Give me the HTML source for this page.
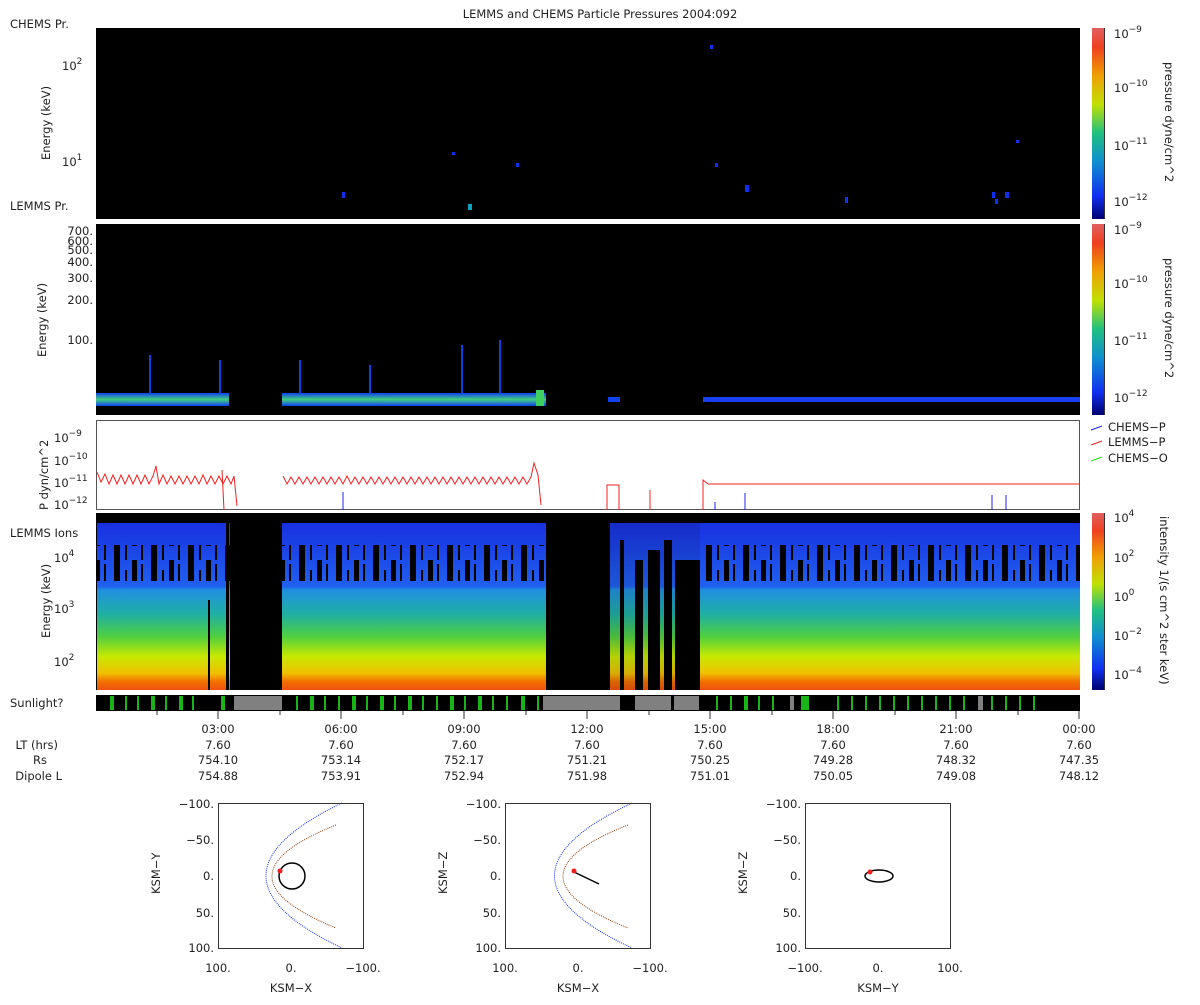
<!DOCTYPE html>
<html><head><meta charset="utf-8"><style>
body{margin:0;background:#fff;width:1200px;height:1000px;overflow:hidden;font-family:"Liberation Sans",sans-serif}
svg text{font-family:"DejaVu Sans","Liberation Sans",sans-serif;font-size:11.5px;fill:#222}
</style></head><body>
<svg width="1200" height="1000" xmlns="http://www.w3.org/2000/svg">
<defs>
<linearGradient id="cb" x1="0" y1="1" x2="0" y2="0">
<stop offset="0" stop-color="#000070"/><stop offset="0.12" stop-color="#1030f0"/><stop offset="0.3" stop-color="#1090d0"/><stop offset="0.45" stop-color="#20c080"/><stop offset="0.6" stop-color="#c0e000"/><stop offset="0.75" stop-color="#f0a000"/><stop offset="0.9" stop-color="#f04020"/><stop offset="1" stop-color="#e06060"/></linearGradient>
<linearGradient id="ion" x1="0" y1="0" x2="0" y2="1">
<stop offset="0" stop-color="#1830e0"/><stop offset="0.38" stop-color="#2060f0"/><stop offset="0.4" stop-color="#2090e0"/><stop offset="0.55" stop-color="#20b0a0"/><stop offset="0.68" stop-color="#50d040"/><stop offset="0.8" stop-color="#c8e800"/><stop offset="0.9" stop-color="#f0c000"/><stop offset="0.95" stop-color="#f07000"/><stop offset="1" stop-color="#f05010"/></linearGradient>
<linearGradient id="band" x1="0" y1="0" x2="0" y2="1">
<stop offset="0" stop-color="#1040f0"/><stop offset="0.5" stop-color="#40d080"/><stop offset="1" stop-color="#1040f0"/></linearGradient>
<pattern id="str" width="37" height="40" patternUnits="userSpaceOnUse">
<rect x="3" y="0" width="6" height="40" fill="#000"/><rect x="14" y="10" width="2" height="30" fill="#000"/><rect x="21" y="0" width="5" height="26" fill="#000"/><rect x="30" y="4" width="2" height="36" fill="#000"/></pattern>
</defs>
<text x="600" y="18" text-anchor="middle">LEMMS and CHEMS Particle Pressures  2004:092</text>
<!-- panel 1 -->
<rect x="96" y="28" width="984" height="191" fill="#000"/>
<text x="10" y="28">CHEMS Pr.</text>
<text x="10" y="210">LEMMS Pr.</text>
<text x="62" y="70">10<tspan dy="-6" font-size="9">2</tspan></text>
<text x="62" y="166">10<tspan dy="-6" font-size="9">1</tspan></text>
<text transform="translate(50,160) rotate(-90)">Energy (keV)</text>
<g fill="#1030f0"><rect x="342" y="192" width="3" height="6"/><rect x="710" y="45" width="3" height="4"/><rect x="452" y="152" width="3" height="3"/><rect x="516" y="163" width="3" height="4"/><rect x="715" y="163" width="3" height="4"/><rect x="745" y="185" width="4" height="7"/><rect x="845" y="197" width="3" height="6"/><rect x="992" y="192" width="3" height="6"/><rect x="1005" y="192" width="4" height="6"/><rect x="995" y="199" width="3" height="5"/><rect x="1016" y="140" width="3" height="3"/></g>
<rect x="468" y="204" width="4" height="6" fill="#10a0c0"/>
<!-- panel 2 -->
<rect x="96" y="224" width="984" height="191" fill="#000"/>
<g font-size="11" text-anchor="end"><text x="93" y="235">700.</text><text x="93" y="245">600.</text><text x="93" y="254">500.</text><text x="93" y="266">400.</text><text x="93" y="282">300.</text><text x="93" y="304">200.</text><text x="93" y="344">100.</text></g>
<text transform="translate(46,357) rotate(-90)">Energy (keV)</text>
<rect x="96" y="393" width="133" height="13" fill="url(#band)"/>
<rect x="282" y="393" width="264" height="13" fill="url(#band)"/>
<rect x="536" y="390" width="8" height="16" fill="#40d060"/>
<rect x="608" y="397" width="12" height="5" fill="#1040f0"/>
<rect x="703" y="397" width="377" height="5" fill="#1840f0"/>
<g stroke="#1040e0" stroke-width="2"><line x1="150" y1="393" x2="150" y2="355"/><line x1="220" y1="393" x2="220" y2="360"/><line x1="462" y1="393" x2="462" y2="345"/><line x1="500" y1="393" x2="500" y2="340"/><line x1="300" y1="393" x2="300" y2="360"/><line x1="370" y1="393" x2="370" y2="365"/></g>
<!-- panel 3 -->
<rect x="96.5" y="420.5" width="983" height="89" fill="#fff" stroke="#555"/>
<text x="54" y="442">10<tspan dy="-6" font-size="9">−9</tspan></text>
<text x="54" y="465">10<tspan dy="-6" font-size="9">−10</tspan></text>
<text x="54" y="487">10<tspan dy="-6" font-size="9">−11</tspan></text>
<text x="54" y="509">10<tspan dy="-6" font-size="9">−12</tspan></text>
<text transform="translate(48,510) rotate(-90)">P dyn/cm^2</text>
<g fill="none" stroke="#f02020" stroke-width="1">
<path d="M97 472 l4 10 l4 -8 l4 10 l4 -9 l4 9 l4 -9 l4 9 l4 -9 l4 9 l4 -9 l4 9 l4 -9 l4 9 l4 -8 l3 -10 l3 18 l4 -9 l4 9 l4 -8 l4 8 l4 -8 l4 8 l4 -8 l4 8 l4 -8 l4 8 l4 -9 l4 9 l4 -8 l4 8 l4 -8 l4 8 l4 -8 l4 8 l3 -8 l3 30 M222 470 l2 40"/>
<path d="M283 476 l4 8 l4 -7 l4 7 l4 -7 l4 7 l4 -7 l4 7 l4 -7 l4 7 l4 -7 l4 7 l4 -7 l4 7 l4 -7 l4 7 l4 -8 l4 8 l4 -7 l4 7 l4 -7 l4 7 l4 -7 l4 7 l4 -7 l4 7 l4 -7 l4 7 l4 -7 l4 7 l4 -7 l4 7 l4 -7 l4 7 l4 -7 l4 7 l4 -7 l4 7 l4 -7 l4 7 l4 -7 l4 7 l4 -7 l4 7 l4 -7 l4 7 l4 -7 l4 7 l4 -7 l4 7 l4 -7 l4 7 l4 -7 l4 7 l4 -7 l4 7 l4 -7 l4 7 l4 -7 l4 7 l4 -7 l4 7 l4 -7 l3 -14 l4 12 l3 30"/>
<path d="M607 510 v-25 h12 v25 M650 510 v-20 M703 510 v-30 l5 4 h372"/>
</g>
<g stroke="#2020f0"><line x1="745" y1="510" x2="745" y2="493"/><line x1="992" y1="510" x2="992" y2="495"/><line x1="1006" y1="510" x2="1006" y2="495"/><line x1="715" y1="510" x2="715" y2="502"/><line x1="343" y1="510" x2="343" y2="492"/></g>
<text x="1108" y="431">CHEMS−P</text><text x="1108" y="446">LEMMS−P</text><text x="1108" y="462">CHEMS−O</text>
<line x1="1091" y1="430" x2="1102" y2="426" stroke="#2020f0"/><line x1="1091" y1="445" x2="1102" y2="441" stroke="#f02020"/><line x1="1091" y1="461" x2="1102" y2="457" stroke="#20e020"/>
<!-- panel 4 -->
<rect x="96" y="513" width="984" height="177" fill="#000"/>
<rect x="97" y="523" width="133" height="167" fill="url(#ion)"/>
<rect x="282" y="523" width="264" height="167" fill="url(#ion)"/>
<rect x="700" y="523" width="380" height="167" fill="url(#ion)"/>
<rect x="610" y="523" width="90" height="167" fill="url(#ion)" opacity="0.9"/>
<rect x="97" y="545" width="133" height="36" fill="url(#str)"/>
<rect x="282" y="545" width="264" height="36" fill="url(#str)"/>
<rect x="700" y="545" width="380" height="36" fill="url(#str)"/>
<g fill="#000"><rect x="97" y="513" width="983" height="9"/>
<rect x="620" y="540" width="4" height="150"/><rect x="635" y="560" width="8" height="130"/><rect x="648" y="550" width="12" height="140"/><rect x="664" y="540" width="8" height="150"/><rect x="675" y="560" width="25" height="130"/><rect x="208" y="600" width="2" height="90"/><rect x="226" y="520" width="3" height="170"/></g>
<text x="10" y="537">LEMMS Ions</text>
<text x="54" y="562">10<tspan dy="-6" font-size="9">4</tspan></text>
<text x="54" y="613">10<tspan dy="-6" font-size="9">3</tspan></text>
<text x="54" y="666">10<tspan dy="-6" font-size="9">2</tspan></text>
<text transform="translate(50,638) rotate(-90)">Energy (keV)</text>
<!-- sunlight -->
<text x="10" y="707">Sunlight?</text>
<rect x="96" y="695" width="984" height="16" fill="#000"/>
<g fill="#808080"><rect x="234" y="696" width="48" height="14"/><rect x="543" y="696" width="77" height="14"/><rect x="635" y="696" width="36" height="14"/><rect x="674" y="696" width="25" height="14"/><rect x="978" y="696" width="5" height="14"/><rect x="790" y="696" width="4" height="14"/></g>
<g stroke="#20f020" stroke-width="1.5">
<path d="M111 696v14M113 696v14M126 696v14M138 696v14M152 696v14M154 696v14M166 696v14M180 696v14M182 696v14M193 696v14M222 696v14M224 696v14M297 696v14M311 696v14M313 696v14M325 696v14M339 696v14M353 696v14M355 696v14M367 696v14M381 696v14M383 696v14M395 696v14M409 696v14M411 696v14M423 696v14M437 696v14M451 696v14M453 696v14M465 696v14M479 696v14M481 696v14M493 696v14M507 696v14M522 696v14M524 696v14M538 696v14M717 696v14M731 696v14M745 696v14M747 696v14M759 696v14M773 696v14M802 696v14M804 696v14M806 696v14M808 696v14M838 696v14M852 696v14M866 696v14M880 696v14M894 696v14M908 696v14M922 696v14M936 696v14M950 696v14M964 696v14M992 696v14M1006 696v14M1020 696v14M1034 696v14"/>
</g>
<!-- ticks -->
<g stroke="#333"><path d="M218 711v8M341 711v8M464 711v8M587 711v8M710 711v8M833 711v8M956 711v8M1079 711v8M157 711v4M280 711v4M403 711v4M526 711v4M649 711v4M772 711v4M895 711v4M1018 711v4"/></g>
<g text-anchor="middle">
<text x="218" y="733">03:00</text><text x="341" y="733">06:00</text><text x="464" y="733">09:00</text><text x="587" y="733">12:00</text><text x="710" y="733">15:00</text><text x="833" y="733">18:00</text><text x="956" y="733">21:00</text><text x="1079" y="733">00:00</text>
<text x="218" y="749">7.60</text><text x="341" y="749">7.60</text><text x="464" y="749">7.60</text><text x="587" y="749">7.60</text><text x="710" y="749">7.60</text><text x="833" y="749">7.60</text><text x="956" y="749">7.60</text><text x="1079" y="749">7.60</text>
<text x="218" y="764">754.10</text><text x="341" y="764">753.14</text><text x="464" y="764">752.17</text><text x="587" y="764">751.21</text><text x="710" y="764">750.25</text><text x="833" y="764">749.28</text><text x="956" y="764">748.32</text><text x="1079" y="764">747.35</text>
<text x="218" y="780">754.88</text><text x="341" y="780">753.91</text><text x="464" y="780">752.94</text><text x="587" y="780">751.98</text><text x="710" y="780">751.01</text><text x="833" y="780">750.05</text><text x="956" y="780">749.08</text><text x="1079" y="780">748.12</text>
</g>
<g text-anchor="end"><text x="58" y="749">LT (hrs)</text><text x="47" y="764">Rs</text><text x="62" y="780">Dipole L</text></g>
<!-- colorbars -->
<g stroke="#333">
<rect x="1092" y="28" width="12" height="191" fill="url(#cb)" stroke="none"/>
<rect x="1092" y="224" width="12" height="191" fill="url(#cb)" stroke="none"/>
<rect x="1092" y="513" width="12" height="177" fill="url(#cb)" stroke="none"/>
<line x1="1104.5" y1="28" x2="1104.5" y2="219"/><line x1="1104.5" y1="224" x2="1104.5" y2="415"/><line x1="1104.5" y1="513" x2="1104.5" y2="690"/>
</g>
<g>
<text x="1114" y="38">10<tspan dy="-6" font-size="9">−9</tspan></text><text x="1114" y="92">10<tspan dy="-6" font-size="9">−10</tspan></text><text x="1114" y="150">10<tspan dy="-6" font-size="9">−11</tspan></text><text x="1114" y="206">10<tspan dy="-6" font-size="9">−12</tspan></text>
<text x="1114" y="234">10<tspan dy="-6" font-size="9">−9</tspan></text><text x="1114" y="288">10<tspan dy="-6" font-size="9">−10</tspan></text><text x="1114" y="345">10<tspan dy="-6" font-size="9">−11</tspan></text><text x="1114" y="402">10<tspan dy="-6" font-size="9">−12</tspan></text>
<text x="1114" y="522">10<tspan dy="-6" font-size="9">4</tspan></text><text x="1114" y="562">10<tspan dy="-6" font-size="9">2</tspan></text><text x="1114" y="601">10<tspan dy="-6" font-size="9">0</tspan></text><text x="1114" y="640">10<tspan dy="-6" font-size="9">−2</tspan></text><text x="1114" y="679">10<tspan dy="-6" font-size="9">−4</tspan></text>
</g>
<text transform="translate(1165,62) rotate(90)">pressure dyne/cm^2</text>
<text transform="translate(1165,258) rotate(90)">pressure dyne/cm^2</text>
<text transform="translate(1160,516) rotate(90)">intensity 1/(s cm^2 ster keV)</text>
<!-- bottom plots -->
<g>
<rect x="218.5" y="803.5" width="145" height="145" fill="none" stroke="#333"/>
<path d="M342 803 Q190 876 342 948" fill="none" stroke="#2030f0" stroke-dasharray="1,1"/>
<path d="M336 825 Q208 876 336 928" fill="none" stroke="#8b4513" stroke-dasharray="1,1"/>
<circle cx="292" cy="876" r="13" fill="none" stroke="#000" stroke-width="1.5"/>
<circle cx="280" cy="871" r="2.5" fill="#f02020"/>
<rect x="505.5" y="803.5" width="145" height="145" fill="none" stroke="#333"/>
<path d="M632 803 Q477 876 632 948" fill="none" stroke="#2030f0" stroke-dasharray="1,1"/>
<path d="M628 825 Q498 876 628 928" fill="none" stroke="#8b4513" stroke-dasharray="1,1"/>
<line x1="574" y1="872" x2="599" y2="884" stroke="#000" stroke-width="1.5"/>
<circle cx="574" cy="871" r="2.5" fill="#f02020"/>
<rect x="805.5" y="803.5" width="145" height="145" fill="none" stroke="#333"/>
<ellipse cx="879" cy="876" rx="14" ry="6" fill="none" stroke="#000" stroke-width="1.5"/>
<circle cx="870" cy="872" r="2.5" fill="#f02020"/>
</g>
<g font-size="11" text-anchor="end">
<text x="214" y="808">−100.</text><text x="214" y="844">−50.</text><text x="214" y="880">0.</text><text x="214" y="917">50.</text><text x="214" y="952">100.</text>
<text x="501" y="808">−100.</text><text x="501" y="844">−50.</text><text x="501" y="880">0.</text><text x="501" y="917">50.</text><text x="501" y="952">100.</text>
<text x="801" y="808">−100.</text><text x="801" y="844">−50.</text><text x="801" y="880">0.</text><text x="801" y="917">50.</text><text x="801" y="952">100.</text>
</g>
<g font-size="11" text-anchor="middle">
<text x="218" y="972">100.</text><text x="291" y="972">0.</text><text x="363" y="972">−100.</text>
<text x="505" y="972">100.</text><text x="578" y="972">0.</text><text x="650" y="972">−100.</text>
<text x="805" y="972">−100.</text><text x="878" y="972">0.</text><text x="950" y="972">100.</text>
<text x="291" y="992">KSM−X</text><text x="578" y="992">KSM−X</text><text x="878" y="992">KSM−Y</text>
</g>
<text transform="translate(160,894) rotate(-90)" font-size="11">KSM−Y</text>
<text transform="translate(447,894) rotate(-90)" font-size="11">KSM−Z</text>
<text transform="translate(747,894) rotate(-90)" font-size="11">KSM−Z</text>
</svg>
</body></html>
